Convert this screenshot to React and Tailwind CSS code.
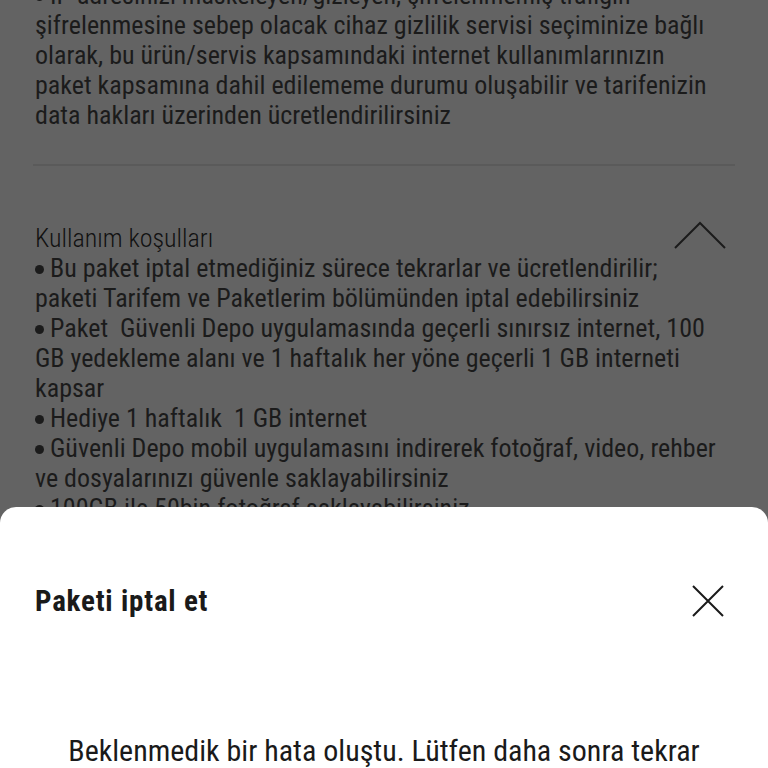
const bgLines = [
  "IP adresinizi maskeleyen/gizleyen, şifrelenmemiş trafiğin",
  "şifrelenmesine sebep olacak cihaz gizlilik servisi seçiminize bağlı",
  "olarak, bu ürün/servis kapsamındaki internet kullanımlarınızın",
  "paket kapsamına dahil edilememe durumu oluşabilir ve tarifenizin",
  "data hakları üzerinden ücretlendirilirsiniz",
];

const termLines = [
  "•Bu paket iptal etmediğiniz sürece tekrarlar ve ücretlendirilir;",
  "paketi Tarifem ve Paketlerim bölümünden iptal edebilirsiniz",
  "•Paket  Güvenli Depo uygulamasında geçerli sınırsız internet, 100",
  "GB yedekleme alanı ve 1 haftalık her yöne geçerli 1 GB interneti",
  "kapsar",
  "•Hediye 1 haftalık  1 GB internet",
  "•Güvenli Depo mobil uygulamasını indirerek fotoğraf, video, rehber",
  "ve dosyalarınızı güvenle saklayabilirsiniz",
  "•100GB ile 50bin fotoğraf saklayabilirsiniz",
];

const condensed = { fontFamily: '"Roboto Condensed", "Liberation Sans Narrow", Roboto, sans-serif' };

function Line({ text }) {
  if (text.startsWith("•")) {
    return (
      <div>
        <span className="inline-block w-[9px] h-[9px] rounded-full bg-[#1b1b1b] mr-[6px] align-[3px]" />
        {text.slice(1)}
      </div>
    );
  }
  return <div>{text}</div>;
}

export default function App() {
  return (
    <div className="relative w-[768px] h-[768px] overflow-hidden bg-[#636363]" style={condensed}>
      <div className="px-[35px] -mt-[20px] text-[26px] leading-[30px] text-[#1b1b1b] whitespace-pre">
        <Line text={"•" + bgLines[0]} />
        {bgLines.slice(1).map((l, i) => (
          <Line key={i} text={l} />
        ))}
        <div className="mt-[34px] mb-[55px] h-[2px] bg-[#5a5a5a] -mx-[2px]" />
        <div className="flex items-end justify-between">
          <div className="font-light text-[#111] -mt-[3px]">Kullanım koşulları</div>
          <svg width="54" height="30" viewBox="0 0 54 30" className="mr-[6px] mb-[2px]">
            <path d="M2 27 L27 2 L52 27" fill="none" stroke="#1b1b1b" strokeWidth="2" />
          </svg>
        </div>
        {termLines.map((l, i) => (
          <Line key={i} text={l} />
        ))}
      </div>

      <div className="absolute left-0 right-0 top-[507px] bottom-0 bg-white rounded-t-[16px]">
        <div className="flex items-center justify-between pl-[35px] pr-[44px] pt-[77px]">
          <div className="text-[29px] font-bold leading-[34px] tracking-[0.8px] text-[#1a1a1a]">Paketi iptal et</div>
          <svg width="32" height="32" viewBox="0 0 32 32">
            <path d="M1 1 L31 31 M31 1 L1 31" stroke="#1a1a1a" strokeWidth="2" />
          </svg>
        </div>
        <div className="mt-[116px] text-center text-[30px] leading-[34px] text-[#1a1a1a]">
          Beklenmedik bir hata oluştu. Lütfen daha sonra tekrar
        </div>
      </div>
    </div>
  );
}
